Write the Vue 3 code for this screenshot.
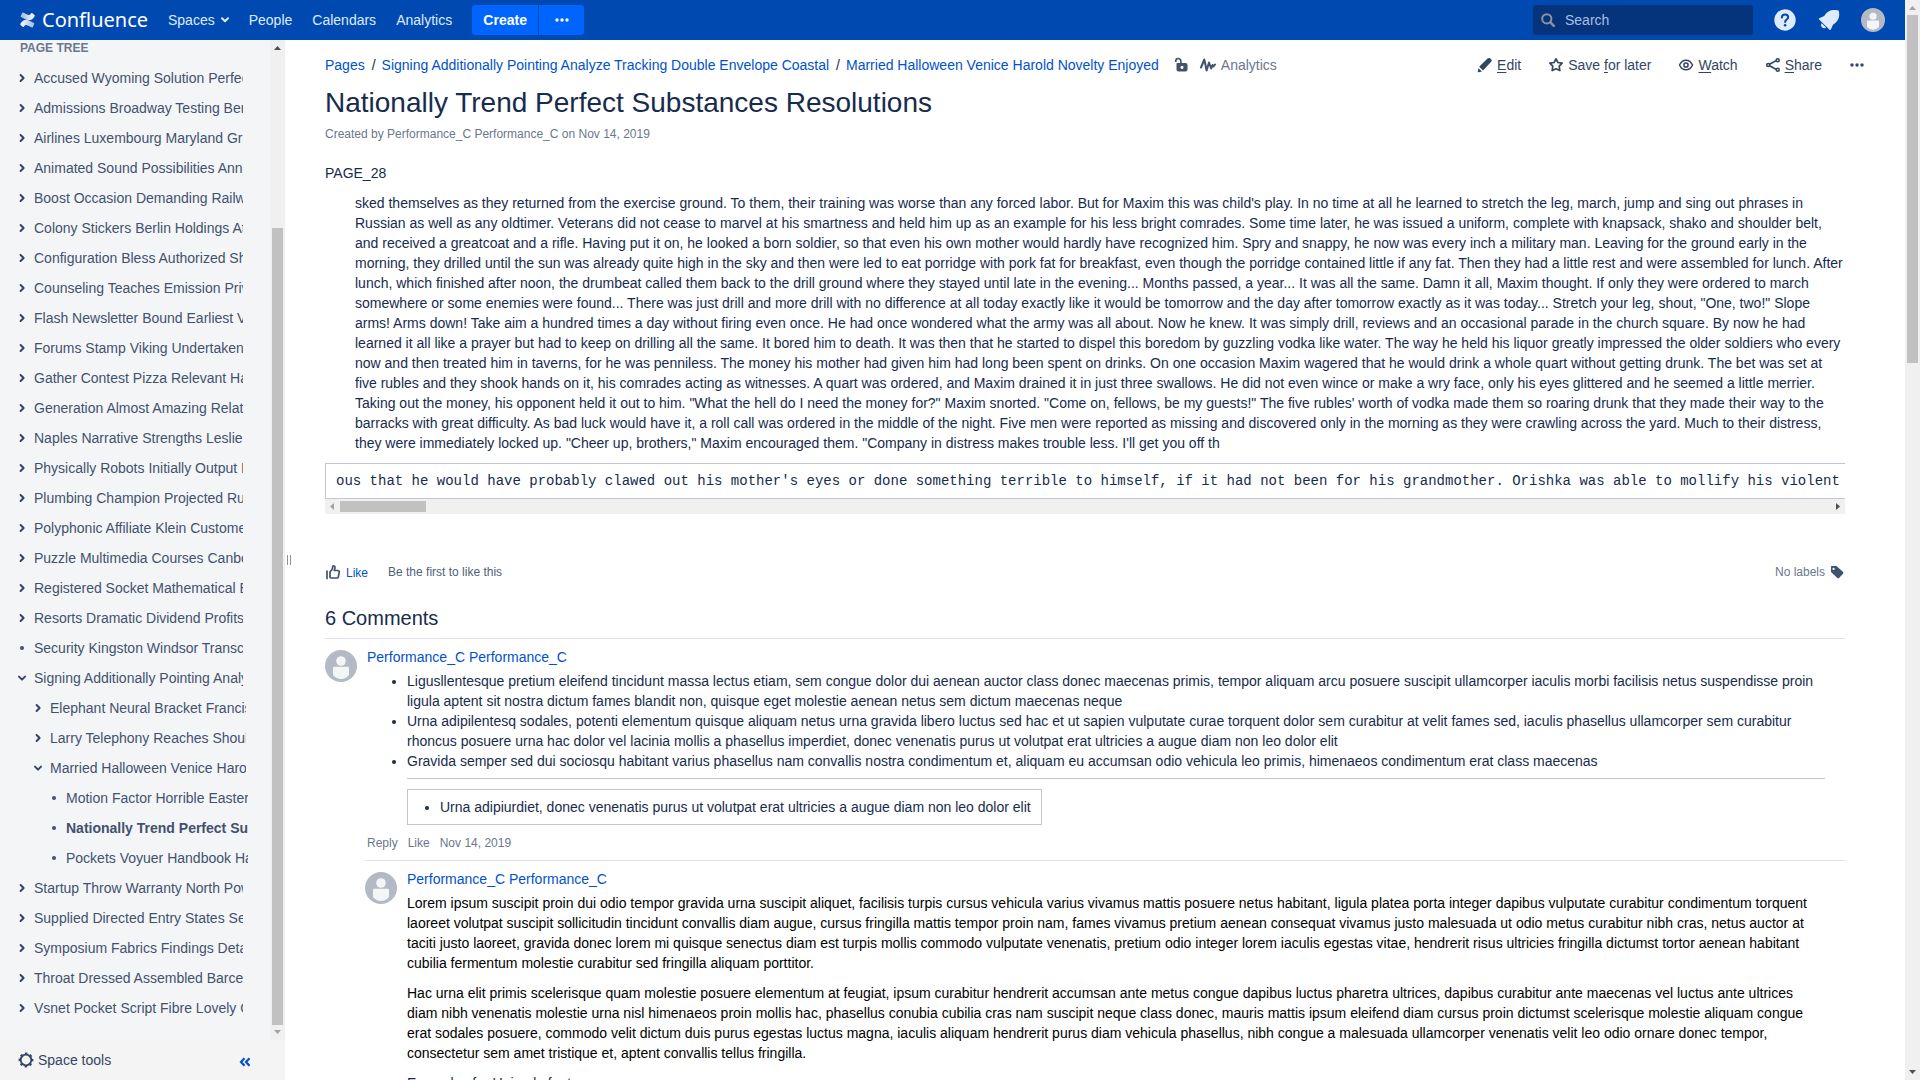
<script setup>
const tree = [
  { t: 'Accused Wyoming Solution Perfect' },
  { t: 'Admissions Broadway Testing Bernard' },
  { t: 'Airlines Luxembourg Maryland Grants' },
  { t: 'Animated Sound Possibilities Annual' },
  { t: 'Boost Occasion Demanding Railway' },
  { t: 'Colony Stickers Berlin Holdings Attached' },
  { t: 'Configuration Bless Authorized Shoes' },
  { t: 'Counseling Teaches Emission Private' },
  { t: 'Flash Newsletter Bound Earliest Vision' },
  { t: 'Forums Stamp Viking Undertaken Lists' },
  { t: 'Gather Contest Pizza Relevant Hawaii' },
  { t: 'Generation Almost Amazing Relations' },
  { t: 'Naples Narrative Strengths Leslie Gold' },
  { t: 'Physically Robots Initially Output Improve' },
  { t: 'Plumbing Champion Projected Runner' },
  { t: 'Polyphonic Affiliate Klein Customers' },
  { t: 'Puzzle Multimedia Courses Canberra' },
  { t: 'Registered Socket Mathematical Exam' },
  { t: 'Resorts Dramatic Dividend Profits Lane' },
  { t: 'Security Kingston Windsor Transcript', k: 'leaf' },
  { t: 'Signing Additionally Pointing Analyze Tracking', k: 'open' },
  { t: 'Elephant Neural Bracket Francisco', l: 1 },
  { t: 'Larry Telephony Reaches Should', l: 1 },
  { t: 'Married Halloween Venice Harold Novelty', l: 1, k: 'open' },
  { t: 'Motion Factor Horrible Eastern', l: 2, k: 'leaf' },
  { t: 'Nationally Trend Perfect Substances Resolutions', l: 2, k: 'leaf', current: true },
  { t: 'Pockets Voyuer Handbook Hardware', l: 2, k: 'leaf' },
  { t: 'Startup Throw Warranty North Powder' },
  { t: 'Supplied Directed Entry States Selected' },
  { t: 'Symposium Fabrics Findings Details' },
  { t: 'Throat Dressed Assembled Barcelona' },
  { t: 'Vsnet Pocket Script Fibre Lovely Gates' },
]
</script>

<template>
  <div class="page">
    <div class="window">
      <header class="header">
        <a class="logo" href="#" aria-label="Confluence">
          <svg width="15" height="16" viewBox="0 0 15 16" aria-hidden="true">
            <defs>
              <linearGradient id="lg1" x1="1" y1="0" x2="0" y2="0"><stop offset="0" stop-color="#fff" /><stop offset="1" stop-color="#fff" stop-opacity=".6" /></linearGradient>
              <linearGradient id="lg2" x1="0" y1="0" x2="1" y2="0"><stop offset="0" stop-color="#fff" /><stop offset="1" stop-color="#fff" stop-opacity=".6" /></linearGradient>
            </defs>
            <path fill="url(#lg2)" d="M.4 11.8C3.4 6.8 6.3 7.2 10 9l4 1.9c.4.2.5.6.3 1l-1.5 3.3c-.2.4-.6.5-1 .3L7.900 13.600C5.900 12.700 5 12.900 3.900 14.700c-.2.4-.6.5-1 .3L.6 12.900c-.4-.3-.5-.7-.2-1.100z" />
            <path fill="url(#lg1)" d="M14.600 4.200C11.600 9.200 8.700 8.800 5 7L1 5.100c-.4-.2-.5-.6-.3-1L2.200.8c.2-.4.6-.5 1-.3l3.900 1.900c2 .9 2.900.7 4-1.100.2-.4.6-.5 1-.3l2.300 2.100c.4.3.500.700.200 1.100z" />
          </svg>
          <span>Confluence</span>
        </a>
        <nav class="nav">
          <a href="#">Spaces
            <svg width="8" height="6" viewBox="0 0 8 6" fill="none" stroke="currentColor" stroke-width="2" stroke-linecap="round" stroke-linejoin="round"><path d="M1 1.200l3 3 3-3" /></svg>
          </a>
          <a href="#">People</a>
          <a href="#">Calendars</a>
          <a href="#">Analytics</a>
        </nav>
        <div class="create">
          <button class="create-main">Create</button>
          <button class="create-more" aria-label="Create from template">
            <svg width="14" height="4" viewBox="0 0 14 4" fill="currentColor"><circle cx="2" cy="2" r="1.700" /><circle cx="7" cy="2" r="1.700" /><circle cx="12" cy="2" r="1.700" /></svg>
          </button>
        </div>
        <label class="search">
          <svg width="14" height="14" viewBox="0 0 14 14" fill="none" stroke="#8993a4" stroke-width="2"><circle cx="5.800" cy="5.800" r="4.600" /><path d="M9.200 9.200l3.600 3.600" stroke-linecap="round" stroke-width="2.400" /></svg>
          <input type="text" placeholder="Search" aria-label="Search" />
        </label>
        <button class="icon-btn" aria-label="Help">
          <svg width="24" height="24" viewBox="0 0 24 24"><circle cx="12" cy="12" r="10.700" fill="#deebff" /><path d="M8.900 9.400C8.900 7.500 10.200 6.400 12 6.400s3.200 1.100 3.200 2.800c0 2.300-3.100 2.400-3.100 4.800" fill="none" stroke="#0747a6" stroke-width="2" stroke-linecap="round" /><circle cx="12.100" cy="17.200" r="1.300" fill="#0747a6" /></svg>
        </button>
        <button class="icon-btn" aria-label="Notifications">
          <svg width="24" height="24" viewBox="0 0 24 24" fill="#deebff"><path d="M2.100 11.400C1.600 10.900 1.700 10.500 2.300 10.200L7.200 8C9.600 3.900 13 2 17 2c1.500 0 2.800.1 4.600.5.500 1.700.7 3 .6 4.700-.2 3.900-2.200 7.100-6.200 9.600l-2.200 4.700c-.3.600-.7.700-1.200.2z" /><path d="M4.700 15.200l4.400 4.300c-1.200 1-3 .9-4.100-.2-1.100-1.200-1.200-2.900-.3-4.100z" /></svg>
        </button>
        <button class="icon-btn" aria-label="Profile">
          <svg width="24" height="24" viewBox="0 0 32 32"><circle cx="16" cy="16" r="16" fill="#b3bac5" /><circle cx="16" cy="11" r="4.800" fill="#f4f5f7" /><path d="M8 17.900q0-1.200 1.200-1.200h13.600q1.200 0 1.200 1.200v7.100q-3.200 4-8 4t-8-4z" fill="#f4f5f7" /></svg>
        </button>
      </header>

      <div class="body">
        <aside class="sidebar">
          <div class="side-scroll">
            <div class="side-content">
              <h2 class="tree-title">PAGE TREE</h2>
              <ul class="tree">
                <li v-for="n in tree" :key="n.t" :class="'lvl' + (n.l || 0)">
                  <svg v-if="n.k === 'leaf'" width="12" height="12" viewBox="0 0 12 12"><circle cx="6" cy="6" r="2" fill="#42526e" /></svg>
                  <svg v-else-if="n.k === 'open'" width="12" height="12" viewBox="0 0 12 12" class="chev"><path d="M3 4.600l3 3 3-3" /></svg>
                  <svg v-else width="12" height="12" viewBox="0 0 12 12" class="chev"><path d="M4.600 3l3 3-3 3" /></svg>
                  <a href="#" :class="{ current: n.current }">{{ n.t }}</a>
                </li>
              </ul>
            </div>
            <div class="vbar side-bar" aria-hidden="true">
              <svg width="15" height="15"><path d="M4 10h7l-3.500-4z" fill="#505050" /></svg>
              <div class="side-lead"></div>
              <div class="vthumb side-thumb"></div>
              <svg width="15" height="15"><path d="M4 5h7L7.500 9z" fill="#a3a3a3" /></svg>
            </div>
          </div>
          <div class="side-foot">
            <button class="tools">
              <svg width="16" height="16" viewBox="0 0 16 16" fill="none" stroke="#344563"><circle cx="8" cy="8" r="5.300" stroke-width="1.800" /><circle cx="8" cy="8" r="6.600" stroke-width="1.600" stroke-dasharray="2.600 2.584" stroke-dashoffset="1.300" /></svg>
              Space tools
            </button>
            <button class="collapse" aria-label="Collapse sidebar">
              <svg width="12" height="10" viewBox="0 0 12 10" fill="none" stroke="#0052cc" stroke-width="2.200"><path d="M5.500 1.200L2 5l3.500 3.800M10.500 1.200L7 5l3.500 3.800" /></svg>
            </button>
          </div>
        </aside>
        <div class="splitter" aria-hidden="true"><i></i><i></i></div>

        <main class="main">
          <div class="topline">
            <nav class="crumbs" aria-label="Breadcrumbs">
              <a href="#">Pages</a><span>/</span>
              <a href="#">Signing Additionally Pointing Analyze Tracking Double Envelope Coastal</a><span>/</span>
              <a href="#">Married Halloween Venice Harold Novelty Enjoyed</a>
            </nav>
            <button class="plain lock" aria-label="Unrestricted">
              <svg width="14" height="16" viewBox="0 0 14 16"><path d="M1.800 5V4a2.500 2.500 0 0 1 5 0v3" fill="none" stroke="#42526e" stroke-width="1.700" /><path fill="#42526e" fill-rule="evenodd" d="M3 6h8.500a2 2 0 0 1 2 2v4.500a2 2 0 0 1-2 2H4.500a2 2 0 0 1-2-2V6.500zM8 8.700a1.600 1.600 0 1 0 0 3.200 1.600 1.600 0 0 0 0-3.200z" /></svg>
            </button>
            <a class="analytics" href="#">
              <svg width="16" height="16" viewBox="0 0 16 16" fill="none" stroke="#42526e" stroke-width="2" stroke-linecap="round" stroke-linejoin="round"><path d="M1 10.500L4.300 2.500l2.300 11L9 5.500l2.200 6 1.300-3.500 1 1.500 1.500-2" /></svg>
              Analytics
            </a>
            <div class="actions">
              <a href="#">
                <svg width="16" height="16" viewBox="0 0 16 16" fill="#344563"><path d="M1.500 11.200l3.500 3.400-3.200.7c-.7.100-1.100-.3-1-1zM2.200 9.800L10 2.100c1.700-1.500 2.600-1.500 3.900-.2 1.200 1.200 1.100 2-.4 3.600L6 13.400z" /></svg>
                <span><u>E</u>dit</span>
              </a>
              <a href="#">
                <svg width="16" height="16" viewBox="0 0 16 16" fill="none" stroke="#344563" stroke-width="1.700" stroke-linejoin="round"><path d="M8 1.900l1.900 3.600 4.200.700-2.900 3 .6 4.300L8 11.700l-3.800 1.800.6-4.300-2.900-3 4.200-.700z" /></svg>
                <span>Save <u>f</u>or later</span>
              </a>
              <a href="#">
                <svg width="16" height="16" viewBox="0 0 16 16" fill="none" stroke="#344563" stroke-width="1.500"><path d="M1.500 8c1.500-3.200 3.800-4.800 6.500-4.800S13 4.800 14.500 8c-1.500 3.200-3.800 4.800-6.500 4.800S3 11.200 1.500 8z" /><circle cx="8" cy="8" r="2.100" /></svg>
                <span><u>W</u>atch</span>
              </a>
              <a href="#">
                <svg width="16" height="16" viewBox="0 0 16 16" fill="none" stroke="#344563" stroke-width="1.600"><path d="M4.500 7.200L11 3.800M4.500 8.800L11 12.200" /><circle cx="3.200" cy="8" r="1.500" /><circle cx="12.700" cy="3.200" r="1.500" /><circle cx="12.700" cy="12.800" r="1.500" /></svg>
                <span><u>S</u>hare</span>
              </a>
              <button class="plain" aria-label="More actions">
                <svg width="16" height="16" viewBox="0 0 16 16" fill="#344563"><circle cx="3" cy="8" r="1.700" /><circle cx="8" cy="8" r="1.700" /><circle cx="13" cy="8" r="1.700" /></svg>
              </button>
            </div>
          </div>

          <h1>Nationally Trend Perfect Substances Resolutions</h1>
          <p class="byline">Created by <a href="#">Performance_C Performance_C</a> on <a href="#">Nov 14, 2019</a></p>

          <p>PAGE_28</p>
          <blockquote>sked themselves as they returned from the exercise ground. To them, their training was worse than any forced labor. But for Maxim this was child's play. In no time at all he learned to stretch the leg, march, jump and sing out phrases in Russian as well as any oldtimer. Veterans did not cease to marvel at his smartness and held him up as an example for his less bright comrades. Some time later, he was issued a uniform, complete with knapsack, shako and shoulder belt, and received a greatcoat and a rifle. Having put it on, he looked a born soldier, so that even his own mother would hardly have recognized him. Spry and snappy, he now was every inch a military man. Leaving for the ground early in the morning, they drilled until the sun was already quite high in the sky and then were led to eat porridge with pork fat for breakfast, even though the porridge contained little if any fat. Then they had a little rest and were assembled for lunch. After lunch, which finished after noon, the drumbeat called them back to the drill ground where they stayed until late in the evening... Months passed, a year... It was all the same. Damn it all, Maxim thought. If only they were ordered to march somewhere or some enemies were found... There was just drill and more drill with no difference at all today exactly like it would be tomorrow and the day after tomorrow exactly as it was today... Stretch your leg, shout, "One, two!" Slope arms! Arms down! Take aim a hundred times a day without firing even once. He had once wondered what the army was all about. Now he knew. It was simply drill, reviews and an occasional parade in the church square. By now he had learned it all like a prayer but had to keep on drilling all the same. It bored him to death. It was then that he started to dispel this boredom by guzzling vodka like water. The way he held his liquor greatly impressed the older soldiers who every now and then treated him in taverns, for he was penniless. The money his mother had given him had long been spent on drinks. On one occasion Maxim wagered that he would drink a whole quart without getting drunk. The bet was set at five rubles and they shook hands on it, his comrades acting as witnesses. A quart was ordered, and Maxim drained it in just three swallows. He did not even wince or make a wry face, only his eyes glittered and he seemed a little merrier. Taking out the money, his opponent held it out to him. "What the hell do I need the money for?" Maxim snorted. "Come on, fellows, be my guests!" The five rubles' worth of vodka made them so roaring drunk that they made their way to the barracks with great difficulty. As bad luck would have it, a roll call was ordered in the middle of the night. Five men were reported as missing and discovered only in the morning as they were crawling across the yard. Much to their distress, they were immediately locked up. "Cheer up, brothers," Maxim encouraged them. "Company in distress makes trouble less. I'll get you off th</blockquote>

          <div class="table-wrap">
            <pre>ous that he would have probably clawed out his mother's eyes or done something terrible to himself, if it had not been for his grandmother. Orishka was able to mollify his violent</pre>
            <div class="hbar" aria-hidden="true">
              <svg width="15" height="15"><path d="M9 4v7L5 7.500z" fill="#a3a3a3" /></svg>
              <div class="hthumb"></div>
              <svg class="end" width="15" height="15"><path d="M6 4v7l4-3.500z" fill="#505050" /></svg>
            </div>
          </div>

          <div class="likes">
            <a href="#" class="like">
              <svg width="16" height="16" viewBox="0 0 16 16" fill="none" stroke="#42526e" stroke-width="1.700" stroke-linejoin="round" stroke-linecap="round"><path d="M2 7v7.500M5 13V8l2-2.500c.6-.9.600-1.800.700-3C7.800 1.400 9.900 1.400 10 3.200c0 1.200-.3 2.300-.8 3.300h3.400c1.300 0 1.800.9 1.600 1.900l-.8 4.300c-.2.900-.7 1.300-1.600 1.300H6.500C5.500 14 5 13.700 5 13z" /></svg>
              <span>Like</span>
            </a>
            <span class="like-text">Be the first to like this</span>
            <span class="labels">No labels
              <svg width="14" height="14" viewBox="0 0 14 14"><path fill="#42526e" fill-rule="evenodd" d="M.5 1h5l6.300 5.800c.8.800.8 1.500 0 2.300l-3.500 3.700c-.7.700-1.500.7-2.200 0L0 7V1.500zM2.600 2.800a1.100 1.100 0 1 0 0 2.200 1.100 1.100 0 0 0 0-2.200z" /></svg>
            </span>
          </div>

          <h2 class="comments-title">6 Comments</h2>

          <article class="comment">
            <svg class="avatar" width="32" height="32" viewBox="0 0 32 32"><circle cx="16" cy="16" r="16" fill="#b3bac5" /><circle cx="16" cy="11" r="4.800" fill="#f4f5f7" /><path d="M8 17.900q0-1.200 1.200-1.200h13.600q1.200 0 1.200 1.200v7.100q-3.200 4-8 4t-8-4z" fill="#f4f5f7" /></svg>
            <div class="comment-body">
              <a href="#" class="author">Performance_C Performance_C</a>
              <div class="indent">
                <ul>
                  <li>Ligusllentesque pretium eleifend tincidunt massa lectus etiam, sem congue dolor dui aenean auctor class donec maecenas primis, tempor aliquam arcu posuere suscipit ullamcorper iaculis morbi facilisis netus suspendisse proin ligula aptent sit nostra dictum fames blandit non, quisque eget molestie aenean netus sem dictum maecenas neque</li>
                  <li>Urna adipilentesq sodales, potenti elementum quisque aliquam netus urna gravida libero luctus sed hac et ut sapien vulputate curae torquent dolor sem curabitur at velit fames sed, iaculis phasellus ullamcorper sem curabitur rhoncus posuere urna hac dolor vel lacinia mollis a phasellus imperdiet, donec venenatis purus ut volutpat erat ultricies a augue diam non leo dolor elit</li>
                  <li>Gravida semper sed dui sociosqu habitant varius phasellus nam convallis nostra condimentum et, aliquam eu accumsan odio vehicula leo primis, himenaeos condimentum erat class maecenas</li>
                </ul>
                <hr />
                <table><tbody><tr><td><ul><li>Urna adipiurdiet, donec venenatis purus ut volutpat erat ultricies a augue diam non leo dolor elit</li></ul></td></tr></tbody></table>
              </div>
              <div class="meta"><a href="#">Reply</a><a href="#">Like</a><a href="#">Nov 14, 2019</a></div>
            </div>
          </article>

          <article class="comment reply">
            <svg class="avatar" width="32" height="32" viewBox="0 0 32 32"><circle cx="16" cy="16" r="16" fill="#b3bac5" /><circle cx="16" cy="11" r="4.800" fill="#f4f5f7" /><path d="M8 17.900q0-1.200 1.200-1.200h13.600q1.200 0 1.200 1.200v7.100q-3.200 4-8 4t-8-4z" fill="#f4f5f7" /></svg>
            <div class="comment-body">
              <a href="#" class="author">Performance_C Performance_C</a>
              <div class="text">
                <p>Lorem ipsum suscipit proin dui odio tempor gravida urna suscipit aliquet, facilisis turpis cursus vehicula varius vivamus mattis posuere netus habitant, ligula platea porta integer dapibus vulputate curabitur condimentum torquent laoreet volutpat suscipit sollicitudin tincidunt convallis diam augue, cursus fringilla mattis tempor proin nam, fames vivamus pretium aenean consequat vivamus justo malesuada ut odio metus curabitur nibh cras, netus auctor at taciti justo laoreet, gravida donec lorem mi quisque senectus diam est turpis mollis commodo vulputate venenatis, pretium odio integer lorem iaculis egestas vitae, hendrerit risus ultricies fringilla dictumst tortor aenean habitant cubilia fermentum molestie curabitur sed fringilla aliquam porttitor.</p>
                <p>Hac urna elit primis scelerisque quam molestie posuere elementum at feugiat, ipsum curabitur hendrerit accumsan ante metus congue dapibus luctus pharetra ultrices, dapibus curabitur ante maecenas vel luctus ante ultrices diam nibh venenatis molestie urna nisl himenaeos proin mollis hac, phasellus conubia cubilia cras nam suscipit neque class donec, mauris mattis ipsum eleifend diam cursus proin dictumst scelerisque molestie aliquam congue erat sodales posuere, commodo velit dictum duis purus egestas luctus magna, iaculis aliquam hendrerit purus diam vehicula phasellus, nibh congue a malesuada ullamcorper venenatis velit leo odio ornare donec tempor, consectetur sem amet tristique et, aptent convallis tellus fringilla.</p>
                <p class="navy">Examples for Unicode fonts</p>
              </div>
            </div>
          </article>
        </main>
      </div>
    </div>

    <div class="vbar" aria-hidden="true">
      <svg width="15" height="15"><path d="M4 10h7l-3.500-4z" fill="#a3a3a3" /></svg>
      <div class="vthumb page-thumb"></div>
      <div class="page-rest"></div>
      <svg width="15" height="15"><path d="M4 5h7L7.500 9z" fill="#505050" /></svg>
    </div>
  </div>
</template>

<style>
body { margin: 0; }
</style>

<style scoped>
* { box-sizing: border-box; }
.page { display: flex; height: 100vh; overflow: hidden; background: #fff; color: #172b4d; font: 14px/20px "Liberation Sans", Arial, sans-serif; }
a { color: #0052cc; text-decoration: none; }
button { border: 0; padding: 0; background: none; font: inherit; color: inherit; }
svg { flex: none; display: block; }
ul { margin: 0; padding: 0; }
p, h1, h2 { margin: 0; }
.window { flex: 1; min-width: 0; display: flex; flex-direction: column; }

.header { flex: none; display: flex; align-items: center; height: 40px; padding-right: 20px; background: #0049b0; color: #deebff; }
.logo { display: flex; align-items: center; gap: 7px; margin-left: 20px; width: 148px; color: #fff; font: 20px/24px "Noto Sans", sans-serif; }
.nav { display: flex; gap: 20px; }
.nav a { display: flex; align-items: center; gap: 6px; color: #deebff; }
.create { display: flex; gap: 1px; margin-left: 20px; color: #fff; }
.create button { height: 30px; background: #0065ff; }
.create-main { width: 66px; border-radius: 3px 0 0 3px; font-weight: bold; }
.create-more { display: flex; align-items: center; justify-content: center; width: 45px; border-radius: 0 3px 3px 0; }
.search { display: flex; align-items: center; gap: 10px; width: 220px; height: 30px; margin-left: auto; margin-right: 20px; padding: 0 8px; border-radius: 3px; background: #05347c; }
.search input { flex: 1; min-width: 0; border: 0; padding: 0; outline: 0; background: none; color: #deebff; font: inherit; }
.search input::placeholder { color: #a9bfe2; opacity: 1; }
.icon-btn + .icon-btn { margin-left: 20px; }

.body { flex: 1; min-height: 0; display: flex; }
.sidebar { flex: none; display: flex; flex-direction: column; width: 285px; background: #f4f5f7; color: #42526e; }
.side-scroll { flex: 1; min-height: 0; display: flex; }
.side-content { flex: 1; min-width: 0; overflow: hidden; }
.tree-title { margin-left: 20px; padding-bottom: 7px; font-size: 12px; line-height: 16px; color: #6b778c; }
.tree { list-style: none; }
.tree li { display: flex; align-items: center; gap: 6px; height: 30px; padding-left: 16px; padding-right: 27px; }
.tree .lvl1 { padding-left: 32px; padding-right: 24px; }
.tree .lvl2 { padding-left: 48px; padding-right: 22px; }
.tree a { flex: 1; overflow: hidden; white-space: nowrap; color: #42526e; }
.tree .current { font-weight: bold; }
.chev { fill: none; stroke: #344563; stroke-width: 2; stroke-linejoin: round; stroke-linecap: round; }
.side-foot { display: flex; align-items: center; justify-content: space-between; height: 40px; padding: 0 34px 0 18px; background: #f4f4f4; }
.tools { display: flex; align-items: center; gap: 4px; color: #344563; }
.collapse { padding-top: 4px; }

.vbar { flex: none; display: flex; flex-direction: column; width: 15px; background: #f0f0f0; }
.vthumb { margin: 0 2px; background: #c1c1c1; }
.side-lead { flex: 173; }
.side-thumb { flex: 797; }
.page-thumb { flex: 348; }
.page-rest { flex: 702; }

.splitter { flex: none; display: flex; align-items: center; justify-content: center; gap: 2px; width: 8px; }
.splitter i { width: 1px; height: 10px; background: #8993a4; }

.main { flex: 1; min-width: 0; overflow: hidden; padding: 15px 60px 0 32px; }
.topline { display: flex; align-items: center; height: 20px; }
.crumbs { display: flex; white-space: nowrap; }
.crumbs span { margin: 0 6px 0 7px; }
.lock { margin-left: 15px; }
.analytics { display: flex; align-items: center; gap: 5px; margin-left: 12px; color: #6b778c; }
.actions { display: flex; align-items: center; gap: 27px; margin-left: auto; margin-right: -20px; }
.actions a { display: flex; align-items: center; gap: 4px; color: #344563; white-space: nowrap; }
.actions u { text-underline-offset: 2px; }
h1 { margin-top: 12px; font-size: 28px; line-height: 32px; font-weight: normal; }
.byline { margin: 5px 0 19px; font-size: 12px; color: #6b778c; }
.byline a { color: #6b778c; }
blockquote { margin: 10px 0; padding-left: 30px; }
.table-wrap { overflow: hidden; }
pre { margin: 0; padding: 7px 10px; border: 1px solid #c1c7d0; border-right: 0; font: 14px/20px "Liberation Mono", monospace; overflow: hidden; }
.hbar { display: flex; align-items: center; height: 15px; background: #f0f0f0; }
.hthumb { width: 86px; height: 11px; background: #c1c1c1; }
.end { margin-left: auto; }
.likes { display: flex; align-items: center; height: 20px; margin-top: 48px; font-size: 12px; color: #505f79; }
.like { display: flex; align-items: center; gap: 5px; margin-right: 20px; }
.like span { padding-top: 2px; }
.labels { display: flex; align-items: center; gap: 6px; margin-left: auto; color: #6b778c; }
.comments-title { height: 32px; margin-top: 24px; font-size: 20px; line-height: 24px; font-weight: normal; }
.comment { display: flex; gap: 10px; border-top: 1px solid #dfe1e6; padding-top: 11px; }
.reply { margin-left: 40px; }
.comment-body { flex: 1; min-width: 0; margin-top: -3px; }
.author { display: block; height: 24px; }
.indent { padding: 0 20px 0 40px; }
hr { margin: 7px 0 10px; border: 0; border-top: 1px solid #c1c7d0; }
table { border-collapse: collapse; }
td { padding: 7px 10px 7px 32px; border: 1px solid #c1c7d0; }
.meta { display: flex; gap: 10px; margin: 8px 0 7px; font-size: 12px; }
.meta a { color: #6b778c; }
.text { padding-right: 20px; color: #000; }
.text p + p { margin-top: 10px; }
.text .navy { color: #172b4d; }
</style>
